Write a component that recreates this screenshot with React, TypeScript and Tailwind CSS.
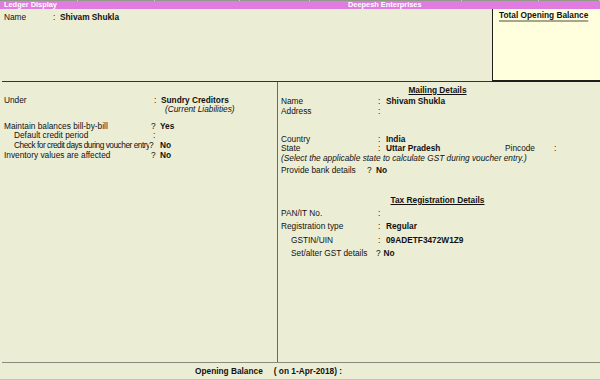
import React from "react";

const FONT = { fontFamily: '"Liberation Sans", Arial, sans-serif' };

// thin grey strip at the very top with light tick marks
const ticks = [78, 77, 85, 70, 152, 77, 61];

function Row({
  h,
  label,
  labelW,
  indent = 0,
  sep,
  sepW,
  sepPad = 0,
  value,
  className = "",
  labelClass = "",
  children,
}: {
  h: string;
  label: string;
  labelW: string;
  indent?: number;
  sep?: string;
  sepW: string;
  sepPad?: number;
  value?: string;
  className?: string;
  labelClass?: string;
  children?: React.ReactNode;
}) {
  return (
    <div className={`flex items-start whitespace-nowrap ${h} ${className}`}>
      <span
        className={`${labelW} shrink-0 overflow-hidden ${labelClass}`}
        style={indent ? { paddingLeft: indent } : undefined}
      >
        {label}
      </span>
      <span className={`${sepW} shrink-0`} style={sepPad ? { paddingLeft: sepPad } : undefined}>
        {sep}
      </span>
      {value && <span className="font-bold">{value}</span>}
      {children}
    </div>
  );
}

export default function App() {
  return (
    <div
      className="w-[600px] h-[380px] overflow-hidden bg-[#ecedd5] text-[#111] text-[8.3px] leading-[10px] flex flex-col"
      style={FONT}
    >
      {/* top strip */}
      <div className="flex h-[1px] bg-[#8e9a86] shrink-0">
        {ticks.map((w, i) => (
          <div key={i} className="border-r border-[#c9d2c2]" style={{ width: w }} />
        ))}
      </div>

      {/* title bar */}
      <div className="flex h-[8px] shrink-0 bg-[#e07ce0] text-white font-bold text-[7.4px] leading-[8px]">
        <span className="w-[348px] pl-[4px]">Ledger Display</span>
        <span>Deepesh Enterprises</span>
      </div>

      {/* name + total opening balance */}
      <div className="flex h-[73px] shrink-0">
        <div className="flex-1 ml-[2px] border-b border-[#34342a] pt-[3px] pl-[2px]">
          <Row h="h-[10px]" label="Name" labelW="w-[49px]" sep=":" sepW="w-[7px]" value="Shivam Shukla" />
        </div>
        <div className="w-[108px] bg-[#ffffde] border-l-[1.5px] border-b-2 border-[#1e1e1a] pl-[6px] pt-[1px]">
          <span className="font-bold underline decoration-2 decoration-[#a9a58c] underline-offset-[1.5px]">
            Total Opening Balance
          </span>
        </div>
      </div>

      {/* main body */}
      <div className="flex h-[280px] shrink-0">
        {/* left */}
        <div className="w-[278px] shrink-0 border-r border-[#6b6b5b] pl-[4px] pt-[13px]">
          <Row h="h-[8.5px]" label="Under" labelW="w-[147px]" sep=":" sepW="w-[10px]" sepPad={3} value="Sundry Creditors" />
          <div className="h-[17px] pl-[161px] italic">(Current Liabilities)</div>
          <Row h="h-[9.5px]" label="Maintain balances bill-by-bill" labelW="w-[147px]" sep="?" sepW="w-[9px]" value="Yes" />
          <Row h="h-[10px]" label="Default credit period" labelW="w-[147px]" indent={10} sep=":" sepW="w-[9px]" sepPad={2} />
          <Row
            h="h-[10px]"
            label="Check for credit days during voucher entry"
            labelW="w-[145px]"
            labelClass="tracking-[-0.48px]"
            indent={10}
            sep="?"
            sepW="w-[11px]"
            value="No"
          />
          <Row h="h-[10px]" label="Inventory values are affected" labelW="w-[147px]" sep="?" sepW="w-[9px]" value="No" />
        </div>

        {/* right */}
        <div className="flex-1 pl-[3px] pt-[3px]">
          <div className="h-[11px] text-center pr-[6px]">
            <span className="font-bold underline underline-offset-[1px]">Mailing Details</span>
          </div>
          <Row h="h-[10px]" label="Name" labelW="w-[96px]" sep=":" sepW="w-[9px]" sepPad={1} value="Shivam Shukla" />
          <Row h="h-[28px]" label="Address" labelW="w-[96px]" sep=":" sepW="w-[9px]" sepPad={1} />
          <Row h="h-[9px]" label="Country" labelW="w-[96px]" sep=":" sepW="w-[9px]" sepPad={1} value="India" />
          <Row h="h-[10px]" label="State" labelW="w-[96px]" sep=":" sepW="w-[9px]" sepPad={1}>
            <span className="font-bold w-[119px] shrink-0">Uttar Pradesh</span>
            <span className="w-[49px] shrink-0">Pincode</span>
            <span>:</span>
          </Row>
          <div className="h-[12px] italic whitespace-nowrap">
            (Select the applicable state to calculate GST during voucher entry.)
          </div>
          <Row h="h-[29.5px]" label="Provide bank details" labelW="w-[86px]" sep="?" sepW="w-[9px]" value="No" />
          <div className="h-[13px] text-center pr-[6px]">
            <span className="font-bold underline underline-offset-[1px]">Tax Registration Details</span>
          </div>
          <Row h="h-[13.67px]" label="PAN/IT No." labelW="w-[96px]" sep=":" sepW="w-[9px]" sepPad={1} />
          <Row h="h-[13.67px]" label="Registration type" labelW="w-[96px]" sep=":" sepW="w-[9px]" sepPad={1} value="Regular" />
          <Row h="h-[13.67px]" label="GSTIN/UIN" labelW="w-[96px]" indent={10} sep=":" sepW="w-[9px]" sepPad={1} value="09ADETF3472W1Z9" />
          <Row h="h-[13.67px]" label="Set/alter GST details" labelW="w-[95px]" indent={10} sep="?" sepW="w-[7.5px]" value="No" />
        </div>
      </div>

      {/* opening balance footer */}
      <div className="flex items-center h-[17px] shrink-0 ml-[2px] border-t border-[#8a8a7a] pl-[193px] font-bold whitespace-nowrap">
        <span>Opening Balance</span>
        <span className="ml-[11px]">( on 1-Apr-2018) :</span>
      </div>
      <div className="h-[1px] shrink-0 bg-[#c4c4b4]" />
    </div>
  );
}
